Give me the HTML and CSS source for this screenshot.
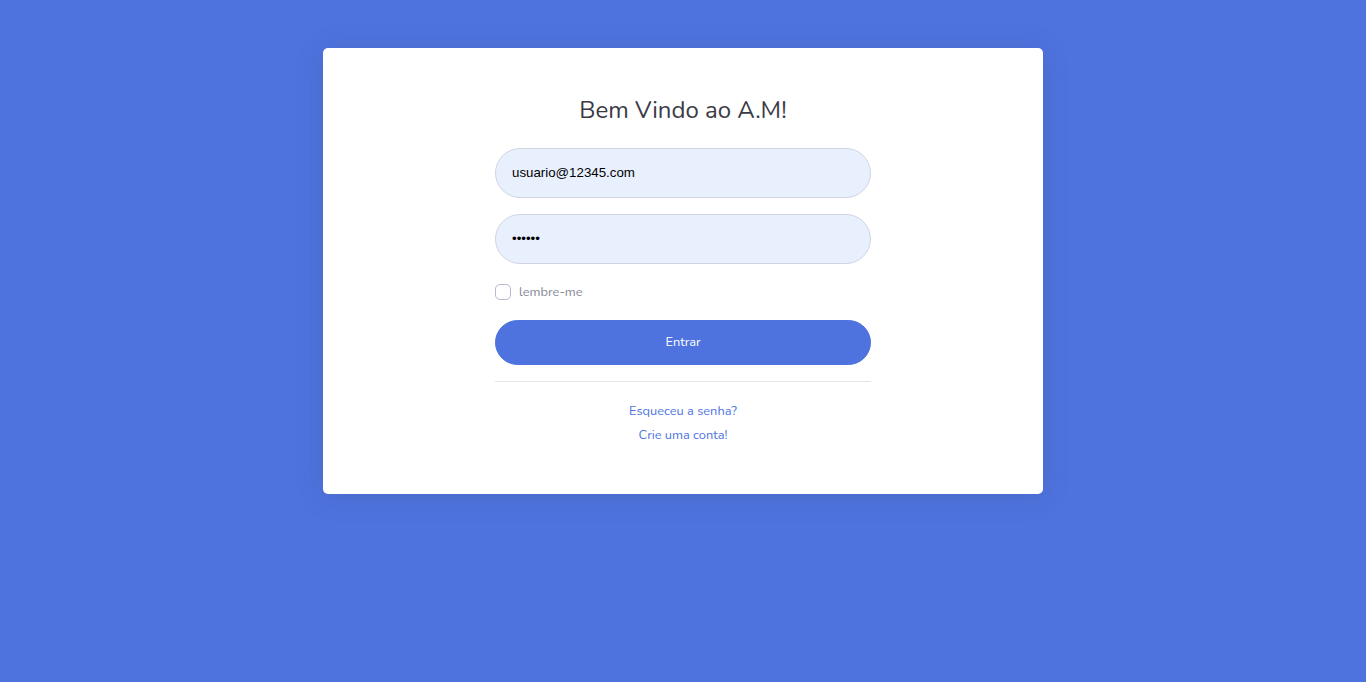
FILE: index.html
```html
<!DOCTYPE html>
<html lang="pt-BR">
<head>
<meta charset="utf-8">
<title>Login</title>
<link rel="stylesheet" href="styles.css">
</head>
<body>
<div class="page">
  <div class="card">
    <div class="card-inner">
      <h1 class="title">Bem Vindo ao A.M!</h1>
      <form class="form">
        <div class="group">
          <input class="field" type="email" value="usuario@12345.com">
        </div>
        <div class="group">
          <input class="field field-pass" type="password" value="123456">
        </div>
        <div class="group check-row">
          <span class="checkbox"></span>
          <span class="check-label">lembre-me</span>
        </div>
        <button type="button" class="btn">Entrar</button>
      </form>
      <hr class="divider">
      <div class="link-row"><a class="link" href="#">Esqueceu a senha?</a></div>
      <div class="link-row"><a class="link" href="#">Crie uma conta!</a></div>
    </div>
  </div>
</div>
</body>
</html>
```
FILE: styles.css
```css
* { box-sizing: border-box; }
html, body { margin: 0; padding: 0; }
body {
  background: #4e73df;
  font-family: "Nunito", "Lato", "Open Sans", sans-serif;
  color: #858796;
  font-size: 16px;
  line-height: 1.5;
  height: 682px;
  overflow: hidden;
}
.page {
  display: flex;
  justify-content: center;
  padding-top: 48px;
}
.card {
  width: 720px;
  background: #fff;
  border-radius: 5px;
  box-shadow: 0 2.4px 28px 0 rgba(58, 59, 69, 0.15);
  padding: 48px 0;
}
.card-inner {
  width: 376px;
  margin: 0 auto;
}
.title {
  margin: 0 0 24px;
  font-size: 24px;
  font-weight: 400;
  line-height: 28px;
  height: 28px;
  color: #3a3b45;
  text-align: center;
}
.form { margin: 0; }
.group { margin-bottom: 16px; }
.field {
  display: block;
  width: 100%;
  height: 50px;
  border: 1px solid #d1d3e2;
  border-radius: 160px;
  background: #e8f0fe;
  padding: 0 16px 2px;
  font-family: "Liberation Sans", Arial, sans-serif;
  font-size: 13.3px;
  color: #000;
  outline: none;
}
.check-row {
  display: flex;
  align-items: center;
  height: 24px;
}
.checkbox {
  width: 16px;
  height: 16px;
  border: 1px solid #b7b9cc;
  border-radius: 5px;
  background: #fff;
  margin-right: 8px;
}
.check-label {
  font-size: 12.8px;
  color: #858796;
  padding-top: 2px;
}
.btn {
  display: block;
  width: 100%;
  height: 45px;
  border: 1px solid #4e73df;
  border-radius: 160px;
  background: #4e73df;
  color: #fff;
  font-family: inherit;
  font-size: 12.8px;
  padding: 0 16px 2px;
  cursor: pointer;
}
.divider {
  margin: 16px 0;
  border: 0;
  border-top: 1px solid rgba(0, 0, 0, 0.1);
}
.link-row {
  text-align: center;
  height: 24px;
  line-height: 24px;
}
.link {
  font-size: 12.8px;
  color: #4e73df;
  text-decoration: none;
}
```
